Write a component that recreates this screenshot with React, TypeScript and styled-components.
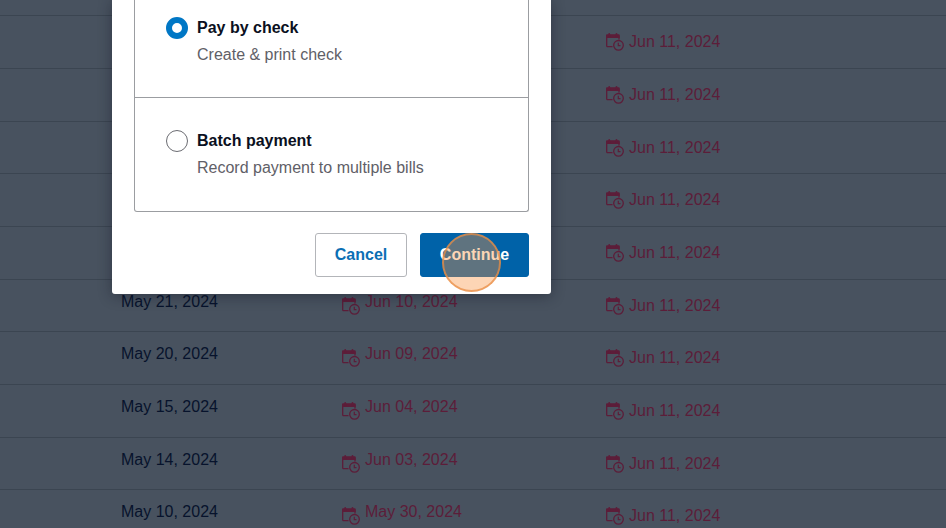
import React from "react";
import styled, { createGlobalStyle } from "styled-components";

const GlobalStyle = createGlobalStyle`
  *, *::before, *::after { box-sizing: border-box; }
  html, body, #root { height: 100%; }
  body {
    margin: 0;
    overflow: hidden;
    background: #48525f;
    font-family: "Liberation Sans", Arial, sans-serif;
    font-size: 16px;
    line-height: 20px;
  }
`;

const Page = styled.main`
  position: relative;
  height: 100%;
  overflow: hidden;
`;

const BillTable = styled.table`
  width: 100%;
  border-collapse: separate;
  border-spacing: 0;
  table-layout: fixed;
`;

const Column = styled.col<{ $width?: number }>`
  width: ${(p) => (p.$width ? `${p.$width}px` : "auto")};
`;

const BillRow = styled.tr`
  height: 53px;
  &:nth-child(3n + 1) { height: 52px; }
  &:first-child { height: 16px; }
`;

const Cell = styled.td<{ $raised?: boolean }>`
  padding: ${(p) => (p.$raised ? "0 0 8px" : "0")};
  border-bottom: 1px solid #3b4551;
  color: #07132c;
  vertical-align: middle;
  white-space: nowrap;
`;

const DueDate = styled.span<{ $lowIcon?: boolean }>`
  display: flex;
  align-items: center;
  gap: 5px;
  color: #5c1d39;
  svg {
    flex: none;
    margin-top: ${(p) => (p.$lowIcon ? "4px" : "0")};
    margin-bottom: ${(p) => (p.$lowIcon ? "-4px" : "0")};
  }
`;

const Dialog = styled.section`
  position: absolute;
  top: 0;
  left: 112px;
  width: 439px;
  padding: 0 22px 17px;
  background: #fff;
  border-radius: 0 0 3px 3px;
  box-shadow: 0 2px 14px rgba(20, 25, 38, 0.45);
`;

const OptionList = styled.fieldset`
  margin: 0;
  padding: 0;
  min-width: 0;
  border: 1px solid #9b9da1;
  border-top: 0;
  border-radius: 0 0 3px 3px;
`;

const Option = styled.label`
  display: grid;
  grid-template-columns: 22px 1fr;
  column-gap: 9px;
  row-gap: 7px;
  padding: 33px 31px;
  cursor: pointer;
  &:first-child {
    padding-top: 18px;
    padding-bottom: 32px;
    border-bottom: 1px solid #9b9da1;
  }
`;

const Radio = styled.input`
  appearance: none;
  width: 22px;
  height: 22px;
  margin: -1px 0;
  border: 1px solid #6b6c72;
  border-radius: 50%;
  background: #fff;
  &:checked { border: 6px solid #0077c5; }
`;

const OptionTitle = styled.strong`
  color: #0b1021;
`;

const OptionHint = styled.span`
  grid-column: 2;
  color: #5f6067;
`;

const Actions = styled.div`
  display: flex;
  justify-content: flex-end;
  gap: 13px;
  margin-top: 21px;
`;

const Button = styled.button<{ $primary?: boolean }>`
  height: 44px;
  padding: 0 18px;
  min-width: ${(p) => (p.$primary ? "109px" : "92px")};
  border: 1px solid ${(p) => (p.$primary ? "#0062a8" : "#b3b5b9")};
  border-radius: 3px;
  background: ${(p) => (p.$primary ? "#0062a8" : "#fff")};
  color: ${(p) => (p.$primary ? "#fff" : "#0b6fb4")};
  font: bold 16px/20px "Liberation Sans", Arial, sans-serif;
  cursor: pointer;
`;

const ClickMarker = styled.span`
  position: absolute;
  right: 50px;
  bottom: 2px;
  width: 59px;
  height: 59px;
  border: 2px solid rgba(232, 142, 70, 0.75);
  border-radius: 50%;
  background: rgba(250, 145, 60, 0.38);
  pointer-events: none;
`;

function CalendarClock() {
  return (
    <svg width="18" height="18" viewBox="0 0 18 18" fill="none" stroke="currentColor" aria-hidden="true">
      <path d="M6.5 13.7H1.6Q.7 13.7 .7 12.8V3M13 3V6.5" strokeWidth="1.3" />
      <path d="M0 2.2Q0 1.2 1 1.2H12.7Q13.7 1.2 13.7 2.2V5H0Z" fill="currentColor" stroke="none" />
      <path d="M3.2 .9V3M10.5 .9V3" strokeWidth="1.8" strokeLinecap="round" />
      <circle cx="12.5" cy="12.3" r="4.8" strokeWidth="1.3" />
      <path d="M12.3 9.8V12.6H14.5" strokeWidth="1.2" />
    </svg>
  );
}

const bills: { issued?: string; due?: string }[] = [
  {},
  {},
  {},
  {},
  {},
  { issued: "May 21, 2024", due: "Jun 10, 2024" },
  { issued: "May 20, 2024", due: "Jun 09, 2024" },
  { issued: "May 15, 2024", due: "Jun 04, 2024" },
  { issued: "May 14, 2024", due: "Jun 03, 2024" },
  { issued: "May 10, 2024", due: "May 30, 2024" },
];

export default function App() {
  return (
    <Page>
      <GlobalStyle />
      <BillTable>
        <colgroup>
          <Column $width={121} />
          <Column $width={221} />
          <Column $width={264} />
          <Column />
        </colgroup>
        <tbody>
          <BillRow>
            <Cell colSpan={4} />
          </BillRow>
          {bills.map((bill, i) => (
            <BillRow key={i}>
              <Cell />
              <Cell $raised>{bill.issued}</Cell>
              <Cell $raised>
                {bill.due && (
                  <DueDate $lowIcon>
                    <CalendarClock />
                    {bill.due}
                  </DueDate>
                )}
              </Cell>
              <Cell>
                <DueDate>
                  <CalendarClock />
                  Jun 11, 2024
                </DueDate>
              </Cell>
            </BillRow>
          ))}
        </tbody>
      </BillTable>
      <Dialog role="dialog" aria-label="Payment method">
        <OptionList>
          <Option>
            <Radio type="radio" name="payment" defaultChecked />
            <OptionTitle>Pay by check</OptionTitle>
            <OptionHint>Create &amp; print check</OptionHint>
          </Option>
          <Option>
            <Radio type="radio" name="payment" />
            <OptionTitle>Batch payment</OptionTitle>
            <OptionHint>Record payment to multiple bills</OptionHint>
          </Option>
        </OptionList>
        <Actions>
          <Button type="button">Cancel</Button>
          <Button type="button" $primary>Continue</Button>
        </Actions>
        <ClickMarker />
      </Dialog>
    </Page>
  );
}
